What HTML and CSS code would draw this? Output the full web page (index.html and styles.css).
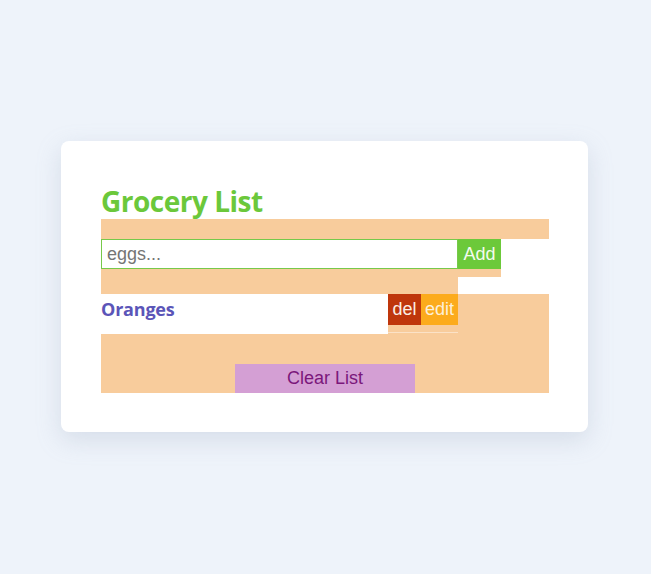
FILE: index.html
```html
<!DOCTYPE html>
<html>
<head>
<meta charset="utf-8">
<link rel="stylesheet" href="styles.css">
</head>
<body>
<div class="card">
  <h1 class="title">Grocery List</h1>
  <div class="band-top"></div>
  <div class="form-row">
    <form class="add-form">
      <input class="add-input" type="text" placeholder="eggs...">
      <button class="add-btn" type="button">Add</button>
    </form>
  </div>
  <div class="band-mid"></div>
  <div class="item-row">
    <div class="item-name">Oranges</div>
    <div class="item-actions">
      <div class="btns">
        <button class="del-btn" type="button">del</button><button class="edit-btn" type="button">edit</button>
      </div>
      <div class="item-line"></div>
    </div>
    <div class="item-rest"></div>
  </div>
  <div class="footer">
    <button class="clear-btn" type="button">Clear List</button>
  </div>
</div>
</body>
</html>
```
FILE: styles.css
```css
html, body {
  margin: 0;
  padding: 0;
}
body {
  background: #eef3fa;
  width: 651px;
  height: 574px;
  font-family: "Liberation Sans", Arial, sans-serif;
}
.card {
  position: relative;
  top: 141px;
  left: 61px;
  width: 448px;
  padding: 40px 39px 39px 40px;
  background: #ffffff;
  border-radius: 8px;
  box-shadow: 0 8px 24px rgba(150, 165, 190, 0.28);
}
.title {
  margin: 0;
  height: 38px;
  font-family: "Open Sans", sans-serif;
  font-weight: 700;
  font-size: 28px;
  line-height: 40px;
  color: #6bc83b;
  letter-spacing: -0.5px;
}
.band-top {
  height: 20px;
  background: #f8cc9c;
}
.form-row {
  display: flex;
}
.add-form {
  display: flex;
  margin: 0;
  padding-bottom: 8px;
  background: #f8cc9c;
}
.add-input {
  box-sizing: border-box;
  width: 357px;
  height: 30px;
  margin: 0;
  padding: 0 5px;
  border: 1px solid #77c94a;
  background: #fff;
  font-family: "Liberation Sans", Arial, sans-serif;
  font-size: 18px;
  outline: none;
}
.add-input::placeholder {
  color: #757575;
}
.add-btn {
  width: 43px;
  height: 30px;
  margin: 0;
  padding: 0;
  border: none;
  background: #6cc93a;
  color: #f4fbef;
  font-family: "Liberation Sans", Arial, sans-serif;
  font-size: 18px;
}
.band-mid {
  width: 357px;
  height: 17px;
  background: #f8cc9c;
}
.item-row {
  display: flex;
  height: 40px;
}
.item-name {
  width: 287px;
  height: 39px;
  background: #ffffff;
  font-family: "Open Sans", sans-serif;
  font-weight: 700;
  font-size: 18px;
  line-height: 30px;
  color: #5b55b8;
  letter-spacing: -0.2px;
}
.item-actions {
  width: 70px;
  height: 40px;
  background: #f8cc9c;
  display: flex;
  flex-direction: column;
}
.btns {
  display: flex;
  height: 31px;
}
.del-btn, .edit-btn {
  height: 31px;
  margin: 0;
  padding: 0;
  border: none;
  font-family: "Liberation Sans", Arial, sans-serif;
  font-size: 18px;
  color: #fbeee4;
}
.del-btn {
  width: 33px;
  background: #bf360c;
}
.edit-btn {
  width: 37px;
  background: #fcab1c;
  color: #fdf0d8;
}
.item-line {
  margin-top: 7px;
  height: 1px;
  background: #fbe2c7;
}
.item-rest {
  flex: 1;
  background: #f8cc9c;
}
.footer {
  height: 29px;
  padding-top: 30px;
  background: #f8cc9c;
  display: flex;
  justify-content: center;
}
.clear-btn {
  width: 180px;
  height: 29px;
  margin: 0;
  padding: 0;
  border: none;
  background: #d49fd4;
  color: #7b177b;
  font-family: "Liberation Sans", Arial, sans-serif;
  font-size: 18px;
}
```
